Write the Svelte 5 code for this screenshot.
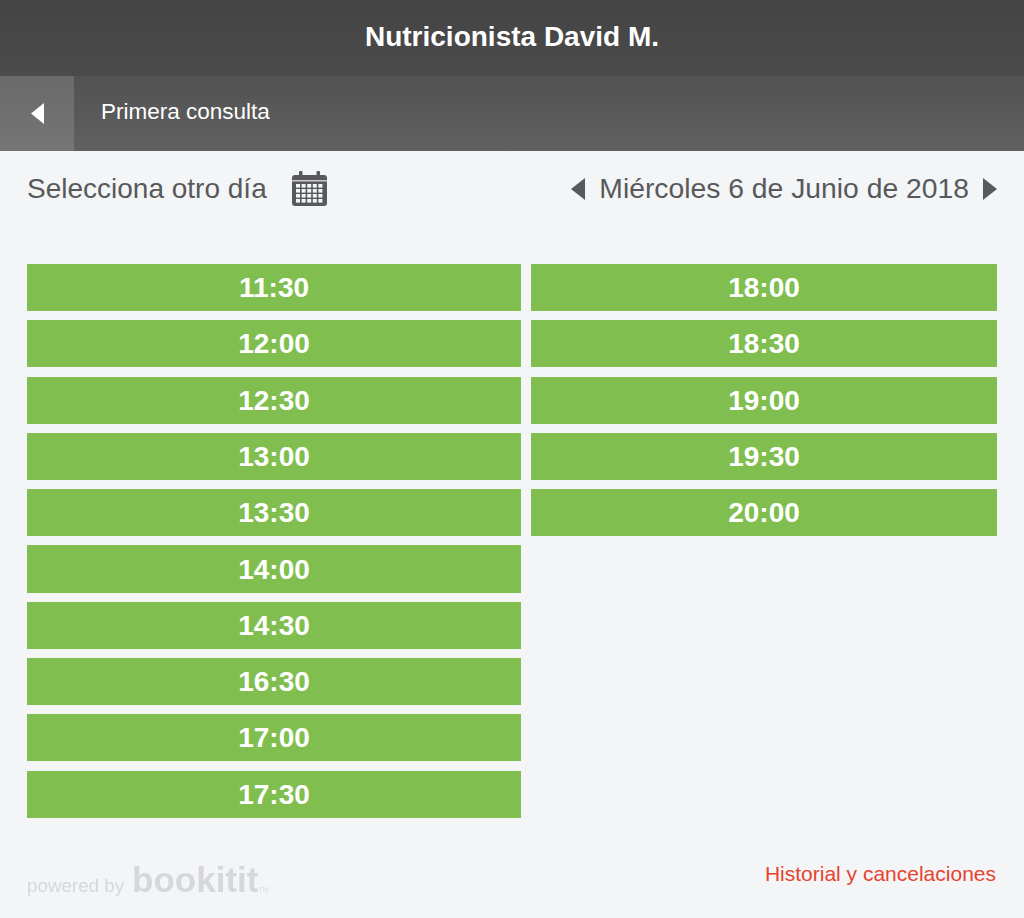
<script>
  const left = ['11:30', '12:00', '12:30', '13:00', '13:30', '14:00', '14:30', '16:30', '17:00', '17:30'];
  const right = ['18:00', '18:30', '19:00', '19:30', '20:00'];
</script>

<div class="page">
  <header class="title">Nutricionista David M.</header>

  <nav class="subbar">
    <button class="back" aria-label="Volver">
      <svg width="13" height="21" viewBox="0 0 13 21"><path d="M13 0V21L0 10.5Z" fill="#fff" /></svg>
    </button>
    <span class="service">Primera consulta</span>
  </nav>

  <main class="content">
    <div class="datebar">
      <div class="pick">
        <span>Selecciona otro día</span>
        <svg class="cal" width="35" height="35" viewBox="0 0 35 35">
          <rect x="0" y="4" width="35" height="31" rx="3" fill="#58595b" />
          <rect x="7" y="0" width="3.5" height="6" rx="1" fill="#58595b" />
          <rect x="24.5" y="0" width="3.5" height="6" rx="1" fill="#58595b" />
          <rect x="0" y="9" width="35" height="1.5" fill="#c9cacc" />
          {#each [0, 1, 2, 3] as row}
            {#each [0, 1, 2, 3, 4] as col}
              <rect x={4 + col * 5.6} y={13 + row * 5} width="4" height="3.6" fill="#f3f5f7" />
            {/each}
          {/each}
        </svg>
      </div>
      <div class="day">
        <svg width="14" height="22" viewBox="0 0 14 22"><path d="M14 0V22L0 11Z" fill="#58595b" /></svg>
        <span>Miércoles 6 de Junio de 2018</span>
        <svg width="14" height="22" viewBox="0 0 14 22"><path d="M0 0V22L14 11Z" fill="#58595b" /></svg>
      </div>
    </div>

    <div class="slots">
      <div class="col left">
        {#each left as t}
          <button class="slot">{t}</button>
        {/each}
      </div>
      <div class="col right">
        {#each right as t}
          <button class="slot">{t}</button>
        {/each}
      </div>
    </div>

    <footer class="foot">
      <div class="powered">
        <span class="by">powered by</span>
        <span class="brand">bookitit</span>
        <span class="tm">TM</span>
      </div>
      <span class="history">Historial y cancelaciones</span>
    </footer>
  </main>
</div>

<style>
  :global(body) {
    background: #f3f5f7;
  }

  .page {
    width: 1024px;
    height: 918px;
    display: flex;
    flex-direction: column;
    font-family: "Liberation Sans", Arial, sans-serif;
    background: #f3f5f7;
  }

  .title {
    height: 76px;
    flex: none;
    display: flex;
    align-items: center;
    justify-content: center;
    padding-bottom: 3px;
    box-sizing: border-box;
    background: linear-gradient(#444444, #4b4b4b);
    color: #fff;
    font-size: 28px;
    font-weight: bold;
  }

  .subbar {
    height: 75px;
    flex: none;
    display: flex;
    align-items: center;
    background: linear-gradient(#525252, #606060);
    color: #fff;
    font-size: 22.5px;
  }

  .back {
    width: 74px;
    height: 100%;
    padding: 0 0 0 1px;
    border: none;
    background: linear-gradient(#6a6a6a, #757575);
    display: flex;
    align-items: center;
    justify-content: center;
  }

  .service {
    margin-left: 27px;
    margin-top: -4px;
  }

  .content {
    flex: 1;
    display: flex;
    flex-direction: column;
    padding: 0 27px;
  }

  .datebar {
    height: 75px;
    display: flex;
    align-items: center;
    justify-content: space-between;
    color: #58595b;
    font-size: 28px;
  }

  .pick {
    display: flex;
    align-items: center;
    gap: 25px;
  }

  .day {
    display: flex;
    align-items: center;
    gap: 14px;
    font-size: 28.3px;
  }

  .slots {
    margin-top: 38px;
    display: flex;
    gap: 10px;
    height: 563px;
    align-items: flex-start;
  }

  .col {
    display: flex;
    flex-direction: column;
    gap: 9.1px;
  }

  .left {
    width: 494px;
  }

  .right {
    width: 466px;
  }

  .slot {
    height: 47.2px;
    padding: 1px 0 0;
    border: none;
    background: #80bf4f;
    color: #fff;
    font-family: inherit;
    font-size: 28px;
    font-weight: bold;
  }

  .foot {
    margin-top: 34px;
    display: flex;
    justify-content: space-between;
    align-items: flex-start;
  }

  .powered {
    display: flex;
    align-items: baseline;
    margin-top: 1px;
    filter: blur(0.6px);
  }

  .by {
    font-size: 18.8px;
    color: #d6d7d9;
  }

  .brand {
    font-size: 35px;
    font-weight: bold;
    margin-left: 8px;
    line-height: 36px;
    color: #d6d7d9;
  }

  .tm {
    font-size: 7px;
    color: #dcdddf;
  }

  .history {
    color: #e8432e;
    font-size: 21px;
    margin-right: 1px;
    margin-top: 1px;
  }
</style>
